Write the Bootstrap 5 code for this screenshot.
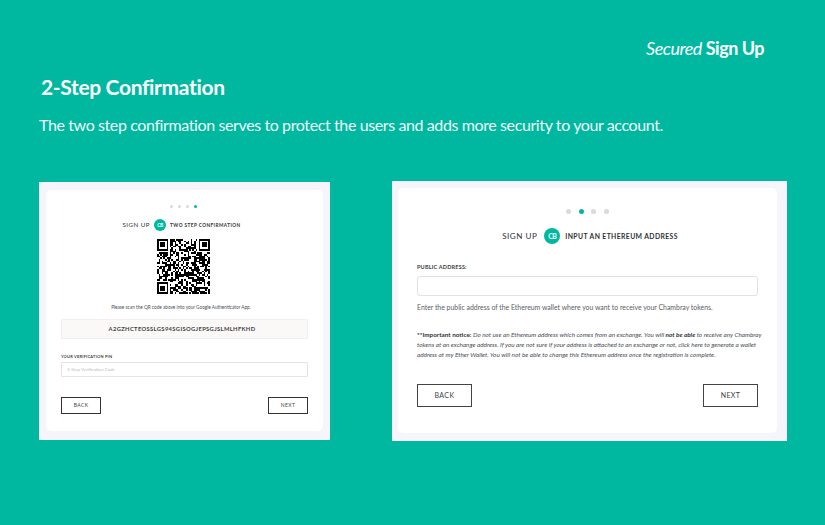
<!DOCTYPE html>
<html lang="en">
<head>
    <meta charset="UTF-8">
    <meta name="viewport" content="width=device-width, initial-scale=1.0">
    <title>Secured Sign Up</title>
    <link href="https://cdn.jsdelivr.net/npm/bootstrap@5.3.0/dist/css/bootstrap.min.css" rel="stylesheet">
    <style>
        html, body { height: 100%; }
        body {
            background: #00b89f;
            font-family: "Lato", "Liberation Sans", sans-serif;
            color: #3c3f45;
            overflow: hidden;
        }
        .slide { width: 825px; height: 525px; padding: 37px 38px 0 39px; }
        .brand { font-size: 18px; font-weight: 700; letter-spacing: -.5px; line-height: 22px; color: #fff; padding-right: 23px; }
        .brand em { font-weight: 400; }
        .slide-title { font-size: 21px; font-weight: 700; letter-spacing: -.35px; line-height: 28px; color: #fff; margin: 14px 0 0 2px; }
        .slide-sub { font-size: 16px; letter-spacing: -.39px; line-height: 20px; color: #f0faf8; margin: 14px 0 0; }
        .shots { margin-top: 46px; }
        .shot { background: #f5f5fb; }
        .shot-left { width: 291px; height: 258px; padding: 8px 7px 9px; margin-top: 1px; }
        .shot-right { width: 395px; height: 260px; padding: 7px 10px 8px 6px; }
        .sheet { background: #fff; border-radius: 5px; height: 100%; }
        .shot-left .sheet { padding: 15px 15px 0; }
        .shot-right .sheet { padding: 21px 19px 0; }
        .dots { gap: 5px; }
        .dot { width: 3px; height: 3px; border-radius: 50%; background: #d9d9de; }
        .dot-on { background: #00b89f; }
        .shot-left .dots { padding-right: 3px; }
        .shot-right .dots { gap: 7.5px; }
        .shot-right .dot { width: 5px; height: 5px; }
        .head-line { font-weight: 700; color: #2f3136; text-transform: uppercase; }
        .head-main { font-weight: 400; letter-spacing: .5px; }
        .logo-dot { background: #00b89f; color: #fff; border-radius: 50%; font-weight: 700; letter-spacing: -.5px; }
        .shot-left .head-line { margin-top: 11px; gap: 4px; font-size: 4.7px; letter-spacing: .45px; line-height: 12px; padding-right: 6px; }
        .shot-left .head-main { font-size: 6.2px; }
        .shot-left .logo-dot { width: 12px; height: 12px; font-size: 5px; }
        .shot-right .head-line { margin-top: 14px; gap: 5px; font-size: 6.8px; letter-spacing: .4px; line-height: 16px; padding-left: 5px; }
        .shot-right .head-main { font-size: 8.1px; margin-right: 2px; }
        .shot-right .logo-dot { width: 16px; height: 16px; font-size: 7px; }
        .qr-box { width: 53px; height: 55px; margin: 8px auto 0; display: block; transform: translateX(-1px); }
        .scan-note { font-size: 4.7px; line-height: 8px; margin: 9px 0 0; padding-right: 7px; text-align: center; color: #4b4e58; }
        .secret-key { background: #fbf8f8; border: 1px solid #f1eff1; border-radius: 1px; height: 20px; margin: 8px 0 0; font-size: 5.8px; font-weight: 700; letter-spacing: .35px; padding-right: 5px; color: #3c3f45; }
        .shot-left .pin-label { font-size: 4px; font-weight: 700; letter-spacing: .2px; line-height: 6px; margin: 15px 0 0; color: #3c3f45; text-transform: uppercase; }
        .pin-input { height: 15px; margin-top: 2px; border: 1px solid #e3e3e8; border-radius: 1px; font-size: 4.5px; line-height: 13px; padding-left: 5px; color: #bcbcc4; }
        .ghost-btn { border: 1px solid #333; background: #fff; color: #3c3f45; font-size: 5px; letter-spacing: .4px; display: flex; align-items: center; justify-content: center; text-transform: uppercase; }
        .shot-left .ghost-btn { width: 40px; height: 17px; }
        .shot-left .btn-row { margin-top: 20px; }
        .shot-right .ghost-btn { width: 55px; height: 23px; font-size: 7px; border-width: 1.5px; border-color: #444; }
        .shot-right .btn-row { margin-top: 24px; }
        .addr-label { font-size: 5.5px; font-weight: 700; letter-spacing: .2px; line-height: 8px; margin: 19px 0 0; color: #3c3f45; text-transform: uppercase; }
        .addr-input { height: 20px; margin-top: 5px; border: 1px solid #e1e1e6; border-radius: 3px; background: #fff; }
        .addr-help { font-size: 6.9px; line-height: 10px; margin: 6px 0 0; color: #5a5d66; white-space: nowrap; }
        .addr-notice { font-size: 6.35px; line-height: 10px; margin: 18px -6px 0 0; font-style: italic; color: #4b4e58; }
        .addr-notice b { font-style: normal; color: #2f3136; }
        .addr-notice .keep-italic { font-style: italic; }
    </style>
</head>
<body>
    <div class="slide">
        <div class="brand text-end"><em>Secured</em> Sign Up</div>
        <h1 class="slide-title">2-Step Confirmation</h1>
        <p class="slide-sub">The two step confirmation serves to protect the users and adds more security to your account.</p>

        <div class="shots d-flex justify-content-between align-items-start">
            <div class="shot shot-left">
                <div class="sheet">
                    <div class="dots d-flex justify-content-center">
                        <span class="dot"></span><span class="dot"></span><span class="dot"></span><span class="dot dot-on"></span>
                    </div>
                    <div class="head-line d-flex justify-content-center align-items-center">
                        <span class="head-main">Sign Up</span>
                        <span class="logo-dot d-flex align-items-center justify-content-center">CB</span>
                        <span>Two Step Confirmation</span>
                    </div>
                    <svg id="qr" class="qr-box" viewBox="0 0 33 33" preserveAspectRatio="none" shape-rendering="crispEdges"></svg>
                    <p class="scan-note">Please scan the QR code above into your Google Authenticator App.</p>
                    <div class="secret-key d-flex align-items-center justify-content-center">A2GZHCTEOSSLGS94SGISOGJEPSGJSLMLHFKHD</div>
                    <p class="pin-label">Your Verification Pin</p>
                    <div class="pin-input">2-Step Verification Code</div>
                    <div class="btn-row d-flex justify-content-between">
                        <span class="ghost-btn">Back</span>
                        <span class="ghost-btn">Next</span>
                    </div>
                </div>
            </div>

            <div class="shot shot-right">
                <div class="sheet">
                    <div class="dots d-flex justify-content-center">
                        <span class="dot"></span><span class="dot dot-on"></span><span class="dot"></span><span class="dot"></span>
                    </div>
                    <div class="head-line d-flex justify-content-center align-items-center">
                        <span class="head-main">Sign Up</span>
                        <span class="logo-dot d-flex align-items-center justify-content-center">CB</span>
                        <span>Input an Ethereum Address</span>
                    </div>
                    <p class="addr-label">Public Address:</p>
                    <div class="addr-input"></div>
                    <p class="addr-help">Enter the public address of the Ethereum wallet where you want to receive your Chambray tokens.</p>
                    <p class="addr-notice"><b>**Important notice:</b> Do not use an Ethereum address which comes from an exchange. You will <b class="keep-italic">not be able</b> to receive any Chambray tokens at an exchange address. If you are not sure if your address is attached to an exchange or not, click here to generate a wallet address at my Ether Wallet. You will not be able to change this Ethereum address once the registration is complete.</p>
                    <div class="btn-row d-flex justify-content-between">
                        <span class="ghost-btn">Back</span>
                        <span class="ghost-btn">Next</span>
                    </div>
                </div>
            </div>
        </div>
    </div>

    <script src="https://cdn.jsdelivr.net/npm/bootstrap@5.3.0/dist/js/bootstrap.bundle.min.js"></script>
    <script>
        // QR modules: three finder squares, the rest from a small seeded generator
        const size = 33;
        let seed = 20170;
        function next() {
            seed = (seed * 1103515245 + 12345) & 0x7fffffff;
            return (seed >> 16) & 1;
        }
        function inFinder(x, y) {
            return (x < 8 && y < 8) || (x >= size - 8 && y < 8) || (x < 8 && y >= size - 8);
        }
        let d = '';
        for (let y = 0; y < size; y++) {
            for (let x = 0; x < size; x++) {
                if (!inFinder(x, y) && next()) d += `M${x} ${y}h1v1h-1z`;
            }
        }
        [[0, 0], [size - 7, 0], [0, size - 7]].forEach(([x, y]) => {
            d += `M${x} ${y}h7v7h-7zM${x + 1} ${y + 1}v5h5v-5zM${x + 2} ${y + 2}h3v3h-3z`;
        });
        document.getElementById('qr').innerHTML = `<path fill-rule="evenodd" fill="#000" d="${d}"/>`;
    </script>
</body>
</html>
